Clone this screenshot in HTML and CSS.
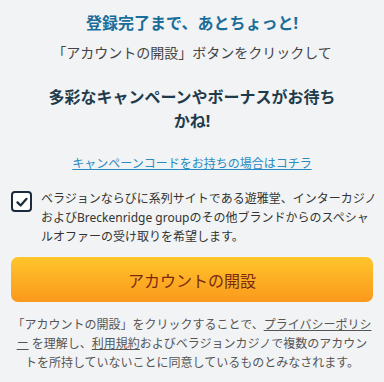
FILE: index.html
```html
<!DOCTYPE html>
<html lang="ja">
<head>
<meta charset="utf-8">
<link rel="stylesheet" href="styles.css">
</head>
<body>
<div class="page">
  <h1 class="title">登録完了まで、あとちょっと!</h1>
  <p class="subtitle">「アカウントの開設」ボタンをクリックして</p>
  <h2 class="heading">多彩なキャンペーンやボーナスがお待ちかね!</h2>
  <p class="code-link"><a href="#">キャンペーンコードをお持ちの場合はコチラ</a></p>
  <label class="consent">
    <span class="box">
      <svg viewBox="0 0 20 20" width="14" height="14"><path d="M3.5 10.5 L8 15 L16.5 5.5" fill="none" stroke="#1b2a3f" stroke-width="3.2" stroke-linecap="round" stroke-linejoin="round"/></svg>
    </span>
    <span class="consent-text">ベラジョンならびに系列サイトである遊雅堂、インターカジノおよびBreckenridge groupのその他ブランドからのスペシャルオファーの受け取りを希望します。</span>
  </label>
  <button class="cta">アカウントの開設</button>
  <p class="legal">「アカウントの開設」をクリックすることで、<a href="#">プライバシーポリシー</a> を理解し、<a href="#">利用規約</a>およびベラジョンカジノで複数のアカウントを所持していないことに同意しているものとみなされます。</p>
</div>
</body>
</html>
```
FILE: styles.css
```css
* { box-sizing: border-box; }
html, body { margin: 0; padding: 0; }
body {
  background: #f1f3f5;
  font-family: "Noto Sans", "Noto Sans CJK JP", sans-serif;
  color: #333;
}
.page {
  padding: 11px 11px 0;
  display: flex;
  flex-direction: column;
}
.title {
  margin: 0;
  font-size: 16px;
  line-height: 24px;
  font-weight: 700;
  color: #1b6d99;
  text-align: center;
}
.subtitle {
  margin: 8px 0 0;
  font-size: 14px;
  line-height: 20px;
  color: #444;
  text-align: center;
}
.heading {
  margin: 22px 34px 0;
  font-size: 16px;
  line-height: 24px;
  font-weight: 700;
  color: #1f3b4b;
  text-align: center;
}
.code-link {
  margin: 22px 0 0;
  font-size: 12px;
  line-height: 18px;
  text-align: center;
}
.code-link a {
  color: #2a8bc2;
  text-decoration: underline;
}
.consent {
  margin-top: 16px;
  display: flex;
  gap: 9px;
  align-items: flex-start;
}
.box {
  flex: none;
  width: 21px;
  height: 21px;
  margin-top: 2px;
  border: 2px solid #1b2a3f;
  border-radius: 4px;
  background: #fff;
  display: flex;
  align-items: center;
  justify-content: center;
}
.consent-text {
  font-size: 12px;
  line-height: 19px;
  color: #333;
  margin-right: -4px;
}
.cta {
  margin-top: 11px;
  height: 45px;
  border: none;
  border-radius: 7px;
  background: linear-gradient(#ffc52b, #fb981d);
  color: #7a2a12;
  font-family: inherit;
  font-size: 16px;
  cursor: pointer;
}
.legal {
  margin: 13px 0 0;
  font-size: 12px;
  line-height: 19px;
  color: #555;
  text-align: center;
}
.legal a {
  color: #555;
  text-decoration: underline;
}
```
